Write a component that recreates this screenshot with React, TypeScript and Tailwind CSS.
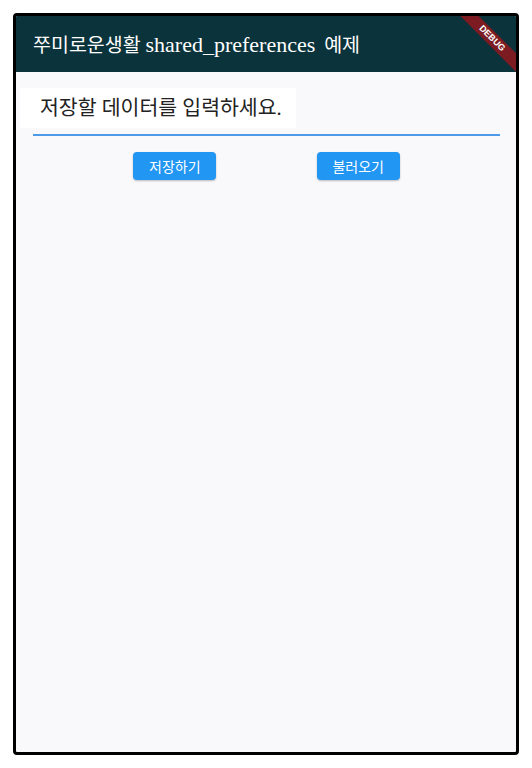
import React from "react";

const serif = { fontFamily: '"Liberation Serif", "Noto Sans CJK KR", serif' };

const FlatButton = ({ children }: { children: React.ReactNode }) => (
  <button className="w-[83px] h-[28px] rounded-[4px] bg-[#2196f3] text-white text-[14px] shadow-[0_1px_2px_rgba(0,0,0,0.25)] font-['Noto_Sans_CJK_KR',sans-serif]">
    {children}
  </button>
);

const App = () => {
  return (
    <div className="w-[532px] h-[768px] bg-white pt-[13px] pl-[13px]">
      <div className="relative w-[506px] h-[742px] border-[3px] border-black rounded-[4px] bg-[#f9f8fb] overflow-hidden flex flex-col">
        <div className="h-[56px] bg-[#0b333b] flex items-center pl-[17px] shrink-0">
          <span className="text-white text-[19.5px] whitespace-nowrap" style={serif}>
            쭈미로운생활 <span className="text-[22px]">shared_preferences</span>{" "}
            <span className="ml-[4px]">예제</span>
          </span>
        </div>
        <div className="absolute left-[416px] top-[16px] w-[120px] h-[13px] rotate-45 bg-[#7c1b22] flex items-center justify-center">
          <span className="text-white text-[9px] font-bold leading-none font-['Liberation_Sans',sans-serif]">
            DEBUG
          </span>
        </div>
        <div className="pt-[16px] pl-[4px]">
          <div className="w-[276px] h-[40px] bg-white flex items-center px-[20px]">
            <span className="text-[#222] text-[20.5px] whitespace-nowrap" style={serif}>
              저장할 데이터를 입력하세요.
            </span>
          </div>
        </div>
        <div className="ml-[17px] mr-[16px] mt-[6px] h-[2px] bg-[#4d9be8]" />
        <div className="ml-[17px] mr-[16px] mt-[16px] flex justify-evenly">
          <FlatButton>저장하기</FlatButton>
          <FlatButton>불러오기</FlatButton>
        </div>
      </div>
    </div>
  );
};

export default App;
